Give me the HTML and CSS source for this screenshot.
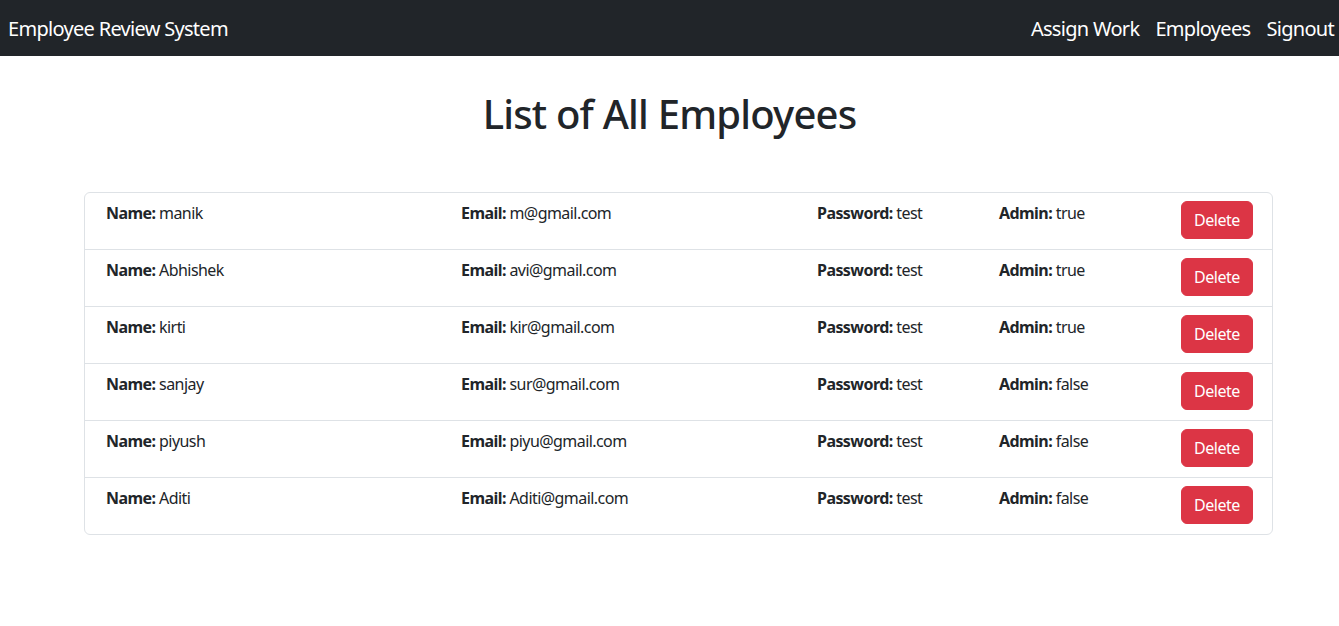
FILE: index.html
```html
<!DOCTYPE html>
<html lang="en">
<head>
<meta charset="utf-8">
<title>Employee Review System</title>
<link rel="stylesheet" href="styles.css">
</head>
<body>
<nav class="navbar">
  <a class="brand" href="#">Employee Review System</a>
  <div class="nav-links">
    <a href="#">Assign Work</a>
    <a href="#">Employees</a>
    <a href="#">Signout</a>
  </div>
</nav>
<main>
  <h1 class="title">List of All Employees</h1>
  <ul class="list">
    <li class="item">
      <div class="col col-name"><b>Name:</b> manik</div>
      <div class="col col-email"><b>Email:</b> m@gmail.com</div>
      <div class="col col-pass"><b>Password:</b> test</div>
      <div class="col col-admin"><b>Admin:</b> true</div>
      <button class="btn-delete">Delete</button>
    </li>
    <li class="item">
      <div class="col col-name"><b>Name:</b> Abhishek</div>
      <div class="col col-email"><b>Email:</b> avi@gmail.com</div>
      <div class="col col-pass"><b>Password:</b> test</div>
      <div class="col col-admin"><b>Admin:</b> true</div>
      <button class="btn-delete">Delete</button>
    </li>
    <li class="item">
      <div class="col col-name"><b>Name:</b> kirti</div>
      <div class="col col-email"><b>Email:</b> kir@gmail.com</div>
      <div class="col col-pass"><b>Password:</b> test</div>
      <div class="col col-admin"><b>Admin:</b> true</div>
      <button class="btn-delete">Delete</button>
    </li>
    <li class="item">
      <div class="col col-name"><b>Name:</b> sanjay</div>
      <div class="col col-email"><b>Email:</b> sur@gmail.com</div>
      <div class="col col-pass"><b>Password:</b> test</div>
      <div class="col col-admin"><b>Admin:</b> false</div>
      <button class="btn-delete">Delete</button>
    </li>
    <li class="item">
      <div class="col col-name"><b>Name:</b> piyush</div>
      <div class="col col-email"><b>Email:</b> piyu@gmail.com</div>
      <div class="col col-pass"><b>Password:</b> test</div>
      <div class="col col-admin"><b>Admin:</b> false</div>
      <button class="btn-delete">Delete</button>
    </li>
    <li class="item">
      <div class="col col-name"><b>Name:</b> Aditi</div>
      <div class="col col-email"><b>Email:</b> Aditi@gmail.com</div>
      <div class="col col-pass"><b>Password:</b> test</div>
      <div class="col col-admin"><b>Admin:</b> false</div>
      <button class="btn-delete">Delete</button>
    </li>
  </ul>
</main>
</body>
</html>
```
FILE: styles.css
```css
* { box-sizing: border-box; }
html, body { margin: 0; padding: 0; }
body {
  font-family: "Noto Sans", "Open Sans", sans-serif;
  font-size: 16px;
  line-height: 1.5;
  letter-spacing: -0.035em;
  color: #212529;
  background: #fff;
  height: 626px;
  overflow: hidden;
}
.navbar {
  height: 56px;
  background: #212529;
  display: flex;
  align-items: center;
  justify-content: space-between;
  padding: 2px 5px 0 8px;
}
.navbar a {
  color: #fff;
  text-decoration: none;
  font-size: 20px;
  letter-spacing: -0.035em;
}
.nav-links {
  display: flex;
  gap: 16px;
}
main {
  padding-top: 34px;
}
.title {
  margin: 0 0 54px;
  text-align: center;
  font-size: 40px;
  font-weight: 500;
  line-height: 1.2;
  letter-spacing: -0.02em;
}
.list {
  list-style: none;
  margin: 0 0 0 84px;
  padding: 0;
  width: 1189px;
  border: 1px solid #dee2e6;
  border-radius: 6px;
}
.item {
  display: flex;
  align-items: flex-start;
  height: 57px;
  padding: 8px 19px 0 21px;
  border-top: 1px solid #dee2e6;
}
.item:first-child { border-top: 0; height: 56px; }
.col b { font-weight: 700; }
.col-name { width: 355px; }
.col-email { width: 356px; }
.col-pass { width: 182px; }
.col-admin { width: 182px; }
.btn-delete {
  margin-left: auto;
  font-family: inherit;
  font-size: 16px;
  line-height: 24px;
  letter-spacing: -0.03em;
  color: #fff;
  background: #dc3545;
  border: 1px solid #dc3545;
  border-radius: 6px;
  padding: 6px 12px;
  height: 38px;
  width: 72px;
}
```
